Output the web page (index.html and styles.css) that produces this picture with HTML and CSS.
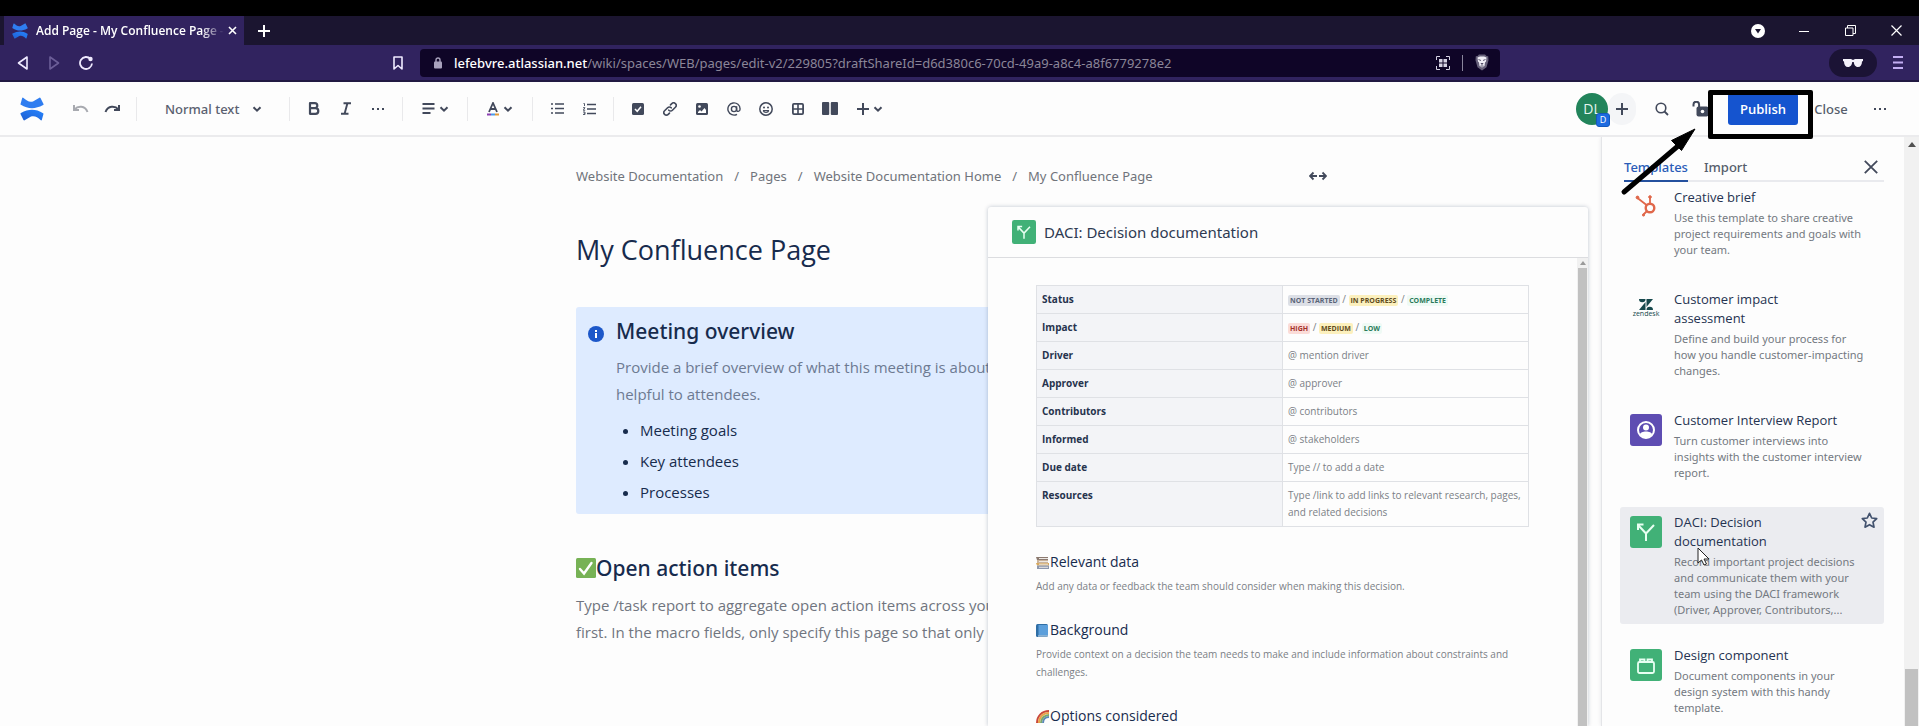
FILE: index.html
```html
<!DOCTYPE html>
<html lang="en">
<head>
<meta charset="utf-8">
<title>Add Page - My Confluence Page</title>
<link rel="stylesheet" href="styles.css">
</head>
<body>
<svg width="0" height="0" class="defs" aria-hidden="true">
  <defs>
    <linearGradient id="g1" x1="1" y1="0" x2="0" y2="1"><stop offset="0" stop-color="#2684ff"/><stop offset="1" stop-color="#1f5fd0"/></linearGradient>
    <symbol id="logo" viewBox="0 0 24 24"><path fill="#2f7df0" d="M3.200.8C6.500 3.800 9.500 5.600 13 4.400L19.400.7a.8.8 0 0 1 1.100.3l3 6a.8.8 0 0 1-.4 1.100C15 12.500 8 12.200.9 7.800a.8.8 0 0 1-.3-1.100L2.200 1a.7.7 0 0 1 1-.2z"/><path fill="url(#g1)" d="M20.800 23.200C17.500 20.200 14.500 18.400 11 19.600l-6.400 3.700a.8.8 0 0 1-1.100-.3L.5 17a.8.8 0 0 1 .4-1.100C9 11.500 16 11.800 23.100 16.200a.8.8 0 0 1 .3 1.100L21.800 23a.7.7 0 0 1-1 .2z"/></symbol>
    <symbol id="chev" viewBox="0 0 10 10"><path d="M1.500 3.200 5 6.700 8.500 3.200" fill="none" stroke="currentColor" stroke-width="2"/></symbol>
    <symbol id="plus" viewBox="0 0 12 12"><path d="M6 0v12M0 6h12" stroke="currentColor" stroke-width="2"/></symbol>
    <symbol id="dots" viewBox="0 0 14 4"><path d="M1 1h2v2H1zM6 1h2v2H6zM11 1h2v2h-2z" fill="currentColor"/></symbol>
    <symbol id="daci" viewBox="0 0 32 32"><rect width="32" height="32" rx="3" fill="#41b177"/><path d="M16 25v-7.500L8.500 9.500M16 17.500l8-8.500M8 14V8.500h5.500" fill="none" stroke="#e8fff2" stroke-width="2"/></symbol>
  </defs>
</svg>

<div class="browser">
  <div class="tabstrip">
    <div class="tab">
      <svg class="i16"><use href="#logo"/></svg>
      <span class="tab-title">Add Page - My Confluence Page -</span>
      <button class="plain tab-close" aria-label="Close tab"><svg width="9" height="9" viewBox="0 0 9 9"><path d="M1 1l7 7M8 1 1 8" stroke="currentColor" stroke-width="1.600"/></svg></button>
    </div>
    <button class="plain newtab" aria-label="New tab"><svg width="12" height="12"><use href="#plus"/></svg></button>
    <div class="window-controls">
      <button class="plain wbtn" aria-label="Search tabs"><svg width="14" height="14" viewBox="0 0 14 14"><circle cx="7" cy="7" r="7" fill="#fff"/><path d="M4 5h6L7 9.500z" fill="#1b1530"/></svg></button>
      <button class="plain wbtn" aria-label="Minimize"><svg width="10" height="10" viewBox="0 0 10 10"><path d="M0 5.500h10" stroke="currentColor"/></svg></button>
      <button class="plain wbtn" aria-label="Restore"><svg width="11" height="11" viewBox="0 0 11 11"><path d="M.5 3h7.500v7.500H.5zM2.500 3V.5h8V8.500H8" fill="none" stroke="currentColor"/></svg></button>
      <button class="plain wbtn" aria-label="Close window"><svg width="11" height="11" viewBox="0 0 11 11"><path d="M.5.5l10 10M10.500.5l-10 10" stroke="currentColor" stroke-width="1.200"/></svg></button>
    </div>
  </div>
  <div class="navbar">
    <div class="nav-left">
      <button class="plain nbtn" aria-label="Back"><svg width="11" height="14" viewBox="0 0 11 14"><path d="M10 1v12L1.500 7z" fill="none" stroke="currentColor" stroke-width="1.600" stroke-linejoin="round"/></svg></button>
      <button class="plain nbtn dim" aria-label="Forward"><svg width="11" height="14" viewBox="0 0 11 14"><path d="M1 1v12L9.500 7z" fill="none" stroke="currentColor" stroke-width="1.600" stroke-linejoin="round"/></svg></button>
      <button class="plain nbtn" aria-label="Reload"><svg width="14" height="14" viewBox="0 0 14 14"><path d="M11.500 3A6 6 0 1 0 13 7.500" fill="none" stroke="currentColor" stroke-width="1.800"/><circle cx="11.500" cy="3" r="2.200" fill="currentColor"/></svg></button>
      <button class="plain nbtn bookmark" aria-label="Bookmark"><svg width="10" height="14" viewBox="0 0 10 14"><path d="M1 1h8v12L5 9.500 1 13z" fill="none" stroke="currentColor" stroke-width="1.600" stroke-linejoin="round"/></svg></button>
    </div>
    <div class="urlbar">
      <svg width="8" height="12" viewBox="0 0 8 12"><path d="M2 5V3a2 2 0 0 1 4 0v2" fill="none" stroke="#a9a2bd" stroke-width="1.400"/><rect y="4.500" width="8" height="7" rx="1" fill="#a9a2bd"/></svg>
      <div class="url"><span class="host">lefebvre.atlassian.net</span>/wiki/spaces/WEB/pages/edit-v2/229805?draftShareId=d6d380c6-70cd-49a9-a8c4-a8f6779278e2</div>
      <svg width="14" height="14" viewBox="0 0 14 14" fill="none" stroke="#d5d1e2"><path d="M.5 4V.5H4M10 .5h3.500V4M13.500 10v3.500H10M4 13.500H.5V10"/><path d="M3 3h3.500v3.500H3zM7.500 3H11v3.500H7.500zM3 7.500h3.500V11H3zM7.500 7.500H11V11H7.500z" fill="#d5d1e2" stroke="none"/></svg>
      <span class="url-sep"></span>
      <svg width="14" height="17" viewBox="0 0 14 17"><path d="M4 .5h6l1.500 1.500 1.700.3.3 4-2 7L7 16.500 2.500 13.300l-2-7 .3-4L2.500 2z" fill="#67617a"/><path d="M2.500 3.500 5 2.500h4l2.500 1-.5 4-1 1-.5 3.500L7 13.500 4.500 12 4 8.500l-1-1z" fill="#f1eff6"/><path d="M3.500 5.500 6 6.500M10.500 5.500 8 6.500M6 9.500h2L7 10.500zM5.500 12h3" stroke="#4b4560" stroke-width=".9" fill="#4b4560"/></svg>
    </div>
    <div class="nav-right">
      <button class="plain pill" aria-label="Private profile"><svg width="20" height="8" viewBox="0 0 20 8"><path d="M0 0h8l2 1 2-1h8v2l-1 .5C19 6 17.500 8 15 8c-2.800 0-4-2.500-4.200-5h-1.600C9 5.500 7.800 8 5 8 2.500 8 1 6 1 2.500L0 2z" fill="#f4f1fa"/></svg></button>
      <button class="plain menu" aria-label="Menu"><svg width="10" height="13" viewBox="0 0 10 13"><path d="M0 1h10M0 6.500h10M0 12h10" stroke="#c3aef3" stroke-width="1.800"/></svg></button>
    </div>
  </div>
</div>

<header class="toolbar">
  <a href="#" class="home" aria-label="Confluence home"><svg width="24" height="24"><use href="#logo"/></svg></a>
  <button class="tb dis" aria-label="Undo"><svg width="17" height="10" viewBox="0 0 17 10"><path d="M2 1v5h5M2.500 5.500C6 1.500 13 1.500 15.500 8" fill="none" stroke="currentColor" stroke-width="2"/></svg></button>
  <button class="tb" aria-label="Redo"><svg width="17" height="10" viewBox="0 0 17 10"><path d="M15 1v5h-5M14.500 5.500C11 1.500 4 1.500 1.500 8" fill="none" stroke="currentColor" stroke-width="2"/></svg></button>
  <span class="sep"></span>
  <div class="style-pick"><select aria-label="Text style"><option>Normal text</option></select><svg width="10" height="10"><use href="#chev"/></svg></div>
  <span class="sep"></span>
  <button class="tb" aria-label="Bold"><svg width="12" height="13" viewBox="0 0 12 13"><path d="M2 1.200h4.800a2.500 2.500 0 0 1 0 5H2zM2 6.200h5.500a2.800 2.800 0 0 1 0 5.600H2z" fill="none" stroke="currentColor" stroke-width="2.200" stroke-linejoin="round"/></svg></button>
  <button class="tb" aria-label="Italic"><svg width="12" height="13" viewBox="0 0 12 13"><path d="M3.500 1.200H11M1 11.800h7.500M7.500 1 4.500 12" fill="none" stroke="currentColor" stroke-width="1.900"/></svg></button>
  <button class="tb" aria-label="More formatting"><svg width="14" height="4"><use href="#dots"/></svg></button>
  <span class="sep"></span>
  <button class="tb wide" aria-label="Alignment"><svg width="13" height="11" viewBox="0 0 13 11"><path d="M.5 1h12M.5 5.500h12M.5 10h8" stroke="currentColor" stroke-width="2"/></svg><svg width="10" height="10"><use href="#chev"/></svg></button>
  <span class="sep"></span>
  <button class="tb wide" aria-label="Text colour"><svg width="12" height="14" viewBox="0 0 12 14"><path d="M2 10 6 1l4 9M3.300 7h5.400" fill="none" stroke="currentColor" stroke-width="1.800"/><path d="M0 12.500h4" stroke="#8b3fb0" stroke-width="2"/><path d="M4 12.500h4" stroke="#4a9be8" stroke-width="2"/><path d="M8 12.500h4" stroke="#e09a3a" stroke-width="2"/></svg><svg width="10" height="10"><use href="#chev"/></svg></button>
  <span class="sep"></span>
  <button class="tb" aria-label="Bullet list"><svg width="13" height="11" viewBox="0 0 13 11"><path d="M0 1h2M0 5.500h2M0 10h2M4 1h9M4 5.500h9M4 10h9" stroke="currentColor" stroke-width="1.700"/></svg></button>
  <button class="tb" aria-label="Numbered list"><svg width="13" height="12" viewBox="0 0 13 12"><path d="M4 1.500h9M4 6h9M4 10.500h9" stroke="currentColor" stroke-width="1.700"/><path d="M.5.5h1V3M0 4.700h2L.2 7.300H2.200M0 9h2v2.500H0M.8 10.200H2" fill="none" stroke="currentColor" stroke-width=".9"/></svg></button>
  <span class="sep"></span>
  <button class="tb" aria-label="Action item"><svg width="12" height="12" viewBox="0 0 12 12"><rect width="12" height="12" rx="1.500" fill="currentColor"/><path d="M3 6l2.200 2.300L9 3.700" fill="none" stroke="#fff" stroke-width="1.500"/></svg></button>
  <button class="tb" aria-label="Link"><svg width="14" height="14" viewBox="0 0 14 14"><g fill="none" stroke="currentColor" stroke-width="1.600" stroke-linecap="round"><path d="M5.800 8.200a2.500 2.500 0 0 0 3.600 0l3-3A2.500 2.500 0 0 0 8.800 1.600L7.500 2.900"/><path d="M8.200 5.800a2.500 2.500 0 0 0-3.600 0l-3 3a2.500 2.500 0 0 0 3.600 3.600l1.300-1.300"/></g></svg></button>
  <button class="tb" aria-label="Image"><svg width="12" height="12" viewBox="0 0 12 12"><rect width="12" height="12" rx="1.500" fill="currentColor"/><circle cx="3.500" cy="3.500" r="1.300" fill="#fff"/><path d="M2 10V9l2-2 1.500 1.500L8.500 5 10 7v3z" fill="#fff"/></svg></button>
  <button class="tb" aria-label="Mention"><svg width="14" height="14" viewBox="0 0 14 14"><g fill="none" stroke="currentColor" stroke-width="1.400"><circle cx="7" cy="7" r="2.600"/><path d="M9.600 4.200v3.600c0 2.400 3.500 2 3.500-.8A6.100 6.100 0 1 0 10 12.300"/></g></svg></button>
  <button class="tb" aria-label="Emoji"><svg width="14" height="14" viewBox="0 0 14 14"><circle cx="7" cy="7" r="6.200" fill="none" stroke="currentColor" stroke-width="1.500"/><circle cx="5" cy="5.500" r="1" fill="currentColor"/><circle cx="9" cy="5.500" r="1" fill="currentColor"/><path d="M4 8.500h6M4.200 8.500c.8 2.500 4.800 2.500 5.600 0" fill="none" stroke="currentColor" stroke-width="1.200"/></svg></button>
  <button class="tb" aria-label="Table"><svg width="12" height="12" viewBox="0 0 12 12"><rect x=".9" y=".9" width="10.200" height="10.200" rx="1" fill="none" stroke="currentColor" stroke-width="1.800"/><path d="M6 1v10M1 6h10" stroke="currentColor" stroke-width="1.600"/></svg></button>
  <button class="tb" aria-label="Layouts"><svg width="16" height="13" viewBox="0 0 16 13"><rect width="7.200" height="13" rx="1" fill="currentColor"/><rect x="8.800" width="7.200" height="13" rx="1" fill="currentColor"/></svg></button>
  <button class="tb wide" aria-label="Insert"><svg width="12" height="12"><use href="#plus"/></svg><svg width="10" height="10"><use href="#chev"/></svg></button>

  <div class="actions">
    <span class="avatar">DL<span class="avatar-badge">D</span></span>
    <button class="invite" aria-label="Invite"><svg width="12" height="12"><use href="#plus"/></svg></button>
    <button class="tb search" aria-label="Search"><svg width="14" height="14" viewBox="0 0 14 14"><circle cx="6" cy="6" r="4.800" fill="none" stroke="currentColor" stroke-width="1.600"/><path d="M9.500 9.500 13 13" stroke="currentColor" stroke-width="1.800"/></svg></button>
    <button class="tb lock" aria-label="Restrictions"><svg width="17" height="16" viewBox="0 0 17 16"><path d="M1.500 5.500v-2a2.800 2.800 0 0 1 5.600 0V7" fill="none" stroke="currentColor" stroke-width="2"/><rect x="4.500" y="5.500" width="12" height="10" rx="2" fill="currentColor"/><circle cx="10.500" cy="10.500" r="1.800" fill="#fff"/></svg></button>
    <button class="publish">Publish</button>
    <button class="close">Close</button>
    <button class="tb" aria-label="More actions"><svg width="14" height="4"><use href="#dots"/></svg></button>
  </div>
</header>

<main class="workspace">
  <article class="editor">
    <nav class="crumbs" aria-label="Breadcrumbs">
      <a href="#">Website Documentation</a><span>/</span><a href="#">Pages</a><span>/</span><a href="#">Website Documentation Home</a><span>/</span><a href="#">My Confluence Page</a>
      <button class="plain widen" aria-label="Make page full-width"><svg width="18" height="10" viewBox="0 0 18 10"><path d="M8 5H1.500M4.500 1.500 1 5l3.500 3.500M10 5h6.500M13.500 1.500 17 5l-3.500 3.500" fill="none" stroke="currentColor" stroke-width="1.800"/></svg></button>
    </nav>
    <h1>My Confluence Page</h1>
    <section class="panel">
      <svg class="info" width="16" height="16" viewBox="0 0 16 16"><circle cx="8" cy="8" r="8" fill="#1c57c9"/><path d="M7 7h2v5H7zM7 4h2v2H7z" fill="#fff"/></svg>
      <div>
        <h2>Meeting overview</h2>
        <p>Provide a brief overview of what this meeting is about<br>helpful to attendees.</p>
        <ul><li>Meeting goals</li><li>Key attendees</li><li>Processes</li></ul>
      </div>
    </section>
    <h2 class="with-emoji"><svg width="20" height="20" viewBox="0 0 20 20"><rect width="20" height="20" rx="1.500" fill="#77b255"/><path d="M4 11l4 4.500L15.500 5" fill="none" stroke="#fff" stroke-width="2.400" stroke-linecap="round"/></svg>Open action items</h2>
    <p>Type /task report to aggregate open action items across your<br>first. In the macro fields, only specify this page so that only</p>
  </article>

  <section class="preview" aria-label="Template preview">
    <header><svg width="24" height="24"><use href="#daci"/></svg><h2>DACI: Decision documentation</h2></header>
    <div class="preview-main">
      <div class="preview-doc">
        <table>
          <tr><th scope="row">Status</th><td><b class="loz grey">NOT STARTED</b> / <b class="loz yellow">IN PROGRESS</b> / <b class="loz green">COMPLETE</b></td></tr>
          <tr><th scope="row">Impact</th><td><b class="loz red">HIGH</b> / <b class="loz yellow">MEDIUM</b> / <b class="loz green">LOW</b></td></tr>
          <tr><th scope="row">Driver</th><td>@ mention driver</td></tr>
          <tr><th scope="row">Approver</th><td>@ approver</td></tr>
          <tr><th scope="row">Contributors</th><td>@ contributors</td></tr>
          <tr><th scope="row">Informed</th><td>@ stakeholders</td></tr>
          <tr><th scope="row">Due date</th><td>Type // to add a date</td></tr>
          <tr><th scope="row">Resources</th><td>Type /link to add links to relevant research, pages,<br>and related decisions</td></tr>
        </table>
        <h3><svg width="13" height="13" viewBox="0 0 13 13"><path d="M0 1h12v3H1z" fill="#8c7a70"/><path d="M1 4h11v3H1z" fill="#c9b39c"/><path d="M0 7h13v2.500H1z" fill="#d8a85c"/><path d="M1 9.500h12V13H1z" fill="#8d97ad"/><path d="M3 2.500h9M3 5.500h9M3 8.200h9M3 11.300h9" stroke="#ece8e4" stroke-width="1"/></svg>Relevant data</h3>
        <p>Add any data or feedback the team should consider when making this decision.</p>
        <h3><svg width="13" height="13" viewBox="0 0 13 13"><rect width="12" height="13" rx="1.500" fill="#2f6ea5"/><path d="M2.500 1H12v10.500H2.500z" fill="#5c9fdb"/><path d="M2 12h10" stroke="#cfdeec"/></svg>Background</h3>
        <p>Provide context on a decision the team needs to make and include information about constraints and challenges.</p>
        <h3><svg width="13" height="13" viewBox="0 0 13 13" fill="none" stroke-width="2"><path d="M1 13C1 6 6 1 13 1" stroke="#c9473a"/><path d="M3 13C3 7 7 3 13 3" stroke="#e8a24a"/><path d="M5 13C5 8.500 8.500 5 13 5" stroke="#7aa86a"/><path d="M7 13c0-3.500 2.500-6 6-6" stroke="#5b88b8"/></svg>Options considered</h3>
      </div>
      <div class="mini-scroll" aria-hidden="true"><svg width="6" height="4" viewBox="0 0 6 4"><path d="M0 4h6L3 0z" fill="#9a9a9a"/></svg><span></span></div>
    </div>
  </section>

  <aside class="sidebar">
    <div class="tabs">
      <div class="tablist" role="tablist"><button role="tab" aria-selected="true">Templates</button><button role="tab" aria-selected="false">Import</button></div>
      <button class="plain side-close" aria-label="Close panel"><svg width="14" height="14" viewBox="0 0 14 14"><path d="M.8.8l12.400 12.400M13.200.8.8 13.200" stroke="currentColor" stroke-width="1.800"/></svg></button>
    </div>
    <div class="list">
      <div class="item">
        <svg width="32" height="32" viewBox="0 0 32 32" fill="none" stroke="#e0674a"><circle cx="20" cy="17" r="4.300" stroke-width="2.400"/><path d="M20 12V7M16.500 14 7.500 7M17 20l-3.500 3.500" stroke-width="1.800"/><circle cx="20" cy="6" r="1.300" fill="#e0674a"/><circle cx="7.500" cy="6.500" r="1.400" fill="#e0674a"/><circle cx="13.500" cy="24" r="1.100" fill="#e0674a"/></svg>
        <div><h4>Creative brief</h4><p>Use this template to share creative<br>project requirements and goals with<br>your team.</p></div>
      </div>
      <div class="item">
        <span class="zendesk"><svg width="14" height="11" viewBox="0 0 14 11"><path d="M0 0h6.500a3.200 3.200 0 0 1-6.500 0zM14 0v0L7.500 8V0zM6.500 11H0l6.500-8zM7.500 11a3.200 3.200 0 0 1 6.500 0z" fill="#17494d"/></svg>zendesk</span>
        <div><h4>Customer impact<br>assessment</h4><p>Define and build your process for<br>how you handle customer-impacting<br>changes.</p></div>
      </div>
      <div class="item">
        <svg width="32" height="32" viewBox="0 0 32 32"><rect width="32" height="32" rx="3" fill="#5e4db2"/><circle cx="16" cy="16" r="8" fill="none" stroke="#fff" stroke-width="2"/><circle cx="16" cy="13.500" r="3" fill="#fff"/><path d="M10 20.500c0-4 12-4 12 0-1.500 2-3.500 3-6 3s-4.500-1-6-3z" fill="#fff"/></svg>
        <div><h4>Customer Interview Report</h4><p>Turn customer interviews into<br>insights with the customer interview<br>report.</p></div>
      </div>
      <div class="item hover">
        <svg width="32" height="32"><use href="#daci"/></svg>
        <div><h4>DACI: Decision<br>documentation</h4><p>Record important project decisions<br>and communicate them with your<br>team using the DACI framework<br>(Driver, Approver, Contributors,...</p></div>
        <button class="plain star" aria-label="Star template"><svg width="17" height="17" viewBox="0 0 17 17"><path d="M8.500 1.300l2.200 4.700 5 .6-3.700 3.500 1 5.100-4.500-2.500L4 15.200l1-5.100L1.300 6.600l5-.6z" fill="none" stroke="currentColor" stroke-width="1.700" stroke-linejoin="round"/></svg></button>
        <svg class="cursor" width="13" height="19" viewBox="0 0 13 19"><path d="M1 1v15l3.500-3 2.500 5 2.500-1-2.500-5H12z" fill="#fff" stroke="#222" stroke-width="1"/></svg>
      </div>
      <div class="item">
        <svg width="32" height="32" viewBox="0 0 32 32"><rect width="32" height="32" rx="3" fill="#41b177"/><g fill="none" stroke="#e8fff2" stroke-width="1.800"><rect x="8" y="13" width="16" height="11" rx="1.500"/><path d="M10 13v-2.500h4.500V13M17.500 13v-2.500H22V13"/></g></svg>
        <div><h4>Design component</h4><p>Document components in your<br>design system with this handy<br>template.</p></div>
      </div>
    </div>
  </aside>

  <div class="page-scroll" aria-hidden="true"><svg width="8" height="5" viewBox="0 0 8 5"><path d="M0 5h8L4 0z" fill="#505050"/></svg><span></span></div>
</main>

<div class="callout"></div>
<svg class="arrow" width="80" height="74" viewBox="0 0 80 74"><path d="M6 67 60 21" stroke="#000" stroke-width="5" stroke-linecap="round"/><path d="M77 4 53.500 15.500 63.500 25.500z" fill="#000" stroke="#000"/></svg>
</body>
</html>
```
FILE: styles.css
```css
* { box-sizing: border-box; }
html, body { height: 100%; }
body {
  margin: 0;
  display: flex;
  flex-direction: column;
  position: relative;
  overflow: hidden;
  background: #fdfdfd;
  color: #172b4d;
  font: 14px/20px "Open Sans", "Noto Sans", sans-serif;
}
h1, h2, h3, h4, p, ul { margin: 0; font-weight: 400; }
a { color: inherit; text-decoration: none; }
button { font: inherit; color: inherit; padding: 0; border: 0; background: none; }
svg { flex: none; display: block; }
.defs { position: absolute; }
.plain { display: flex; align-items: center; justify-content: center; }
.i16 { width: 16px; height: 16px; }

/* Browser chrome */
.browser { border-top: 16px solid #000; color: #fff; flex: none; }
.tabstrip { display: flex; height: 29px; background: #1b1530; padding-left: 4px; }
.tab { display: flex; align-items: center; width: 240px; padding: 0 2px 0 8px; background: #31235f; }
.tab-title {
  flex: 1;
  margin-left: 8px;
  white-space: nowrap;
  font-size: 12px;
  font-weight: 600;
  mask-image: linear-gradient(to right, #000 88%, transparent);
}
.tab-close { width: 20px; height: 16px; }
.newtab { width: 40px; }
.window-controls { display: flex; margin-left: auto; }
.wbtn { width: 46px; }
.navbar {
  display: grid;
  grid-template-columns: 420px 1fr 419px;
  align-items: center;
  height: 37px;
  background: #31235f;
  border-bottom: 2px solid #211942;
}
.nav-left, .nav-right { display: flex; align-items: center; }
.nav-left { padding: 0 6px; color: #efeaff; }
.nbtn { width: 32px; height: 28px; }
.dim { color: #6c5e98; }
.bookmark { margin-left: auto; }
.urlbar {
  display: flex;
  align-items: center;
  height: 28px;
  padding: 0 11px 0 14px;
  gap: 12px;
  border-radius: 4px;
  background: #0f0527;
  min-width: 0;
}
.url {
  flex: 1;
  min-width: 0;
  overflow: hidden;
  white-space: nowrap;
  color: #8b8598;
  font: 13px/20px "Noto Sans", sans-serif;
}
.host { color: #fff; font-weight: 500; }
.url-sep { width: 1px; height: 16px; background: #8a859c; }
.nav-right { justify-content: flex-end; gap: 8px; padding-right: 8px; }
.pill { width: 48px; height: 28px; border-radius: 14px; background: #1b1335; }
.menu { width: 26px; height: 28px; }

/* Editor toolbar */
.toolbar {
  display: flex;
  align-items: center;
  flex: none;
  height: 55px;
  padding: 0 23px 0 20px;
  border-bottom: 2px solid #ebebed;
  color: #42495b;
}
.home { width: 44px; }
.tb { display: flex; align-items: center; justify-content: center; width: 32px; height: 32px; }
.tb.wide { width: 48px; gap: 4px; }
.dis { color: #a8aab0; }
.sep { width: 1px; height: 24px; margin: 0 8px; background: #e9e9eb; }
.style-pick { position: relative; }
.style-pick select {
  appearance: none;
  width: 136px;
  height: 32px;
  padding: 0 0 0 20px;
  border: 0;
  background: none;
  color: #5a6170;
  font: 500 13px/20px "Noto Sans", sans-serif;
}
.style-pick svg { position: absolute; right: 19px; top: 11px; pointer-events: none; }
.actions { display: flex; align-items: center; margin-left: auto; }
.avatar {
  position: relative;
  width: 32px;
  height: 32px;
  border-radius: 50%;
  background: #22845b;
  color: #e6f5ee;
  font-size: 14px;
  line-height: 32px;
  text-align: center;
}
.avatar-badge {
  position: absolute;
  right: -2px;
  bottom: -2px;
  width: 14px;
  height: 14px;
  border: 1px solid #1558bc;
  border-radius: 3px;
  background: #1d6be0;
  color: #fff;
  font-size: 9px;
  line-height: 12px;
}
.invite {
  display: flex;
  align-items: center;
  justify-content: center;
  width: 28px;
  height: 32px;
  border-radius: 14px;
  background: #f4f5f7;
}
.search { margin: 0 6px 0 10px; }
.publish { width: 70px; height: 32px; margin-left: 12px; border-radius: 3px; background: #1554cf; color: #fff; font-weight: 600; font-size: 13px; }
.close { width: 66px; height: 32px; color: #565d6b; font: 500 13px/20px "Noto Sans", sans-serif; }

/* Page editor */
.workspace { position: relative; flex: 1; min-height: 0; display: flex; overflow: hidden; padding-right: 15px; }
.editor {
  width: 752px;
  margin: 0 auto;
  padding-top: 28px;
  font-size: 15px;
  line-height: 27px;
  white-space: nowrap;
}
.editor p { color: #70757f; }
.crumbs { display: flex; align-items: center; gap: 11px; font: 13px/22px "Noto Sans", sans-serif; color: #70747b; }
.widen { margin-left: auto; color: #42495b; width: 20px; height: 20px; }
h1 { margin-top: 43px; font-size: 27px; line-height: 40px; }
.panel {
  display: flex;
  gap: 12px;
  margin-top: 37px;
  padding: 10px 12px 8px;
  border-radius: 3px;
  background: #deebff;
}
.info { margin-top: 9px; }
.editor h2 { font: 500 21px/28px "Noto Sans", sans-serif; }
.editor h2 + p { margin-top: 10px; }
.editor .panel p { margin-top: 9px; color: #6d7a92; }
.editor ul { margin-top: 9px; padding-left: 24px; display: flex; flex-direction: column; gap: 4px; }
.editor .with-emoji { display: flex; align-items: center; margin-top: 40px; }

/* Template preview */
.preview {
  position: absolute;
  top: 70px;
  right: 331px;
  bottom: 0;
  width: 600px;
  display: flex;
  flex-direction: column;
  border-radius: 3px 3px 0 0;
  background: #fdfdfd;
  box-shadow: 0 0 4px rgba(9, 30, 66, .25);
}
.preview header { display: flex; align-items: center; gap: 8px; height: 51px; padding: 0 24px; border-bottom: 1px solid #dcdde0; }
.preview h2 { font: 15px/20px "Noto Sans", sans-serif; color: #2e3a52; }
.preview-main { display: flex; flex: 1; min-height: 0; }
.preview-doc { flex: 1; overflow: hidden; padding: 27px 48px 0; font-size: 10px; line-height: 18px; color: #7b7f86; }
.preview table { width: 493px; border-collapse: collapse; table-layout: fixed; line-height: 17px; }
.preview th, .preview td { padding: 5px; border: 1px solid #dfe1e5; text-align: left; vertical-align: top; white-space: nowrap; }
.preview th { background: #f3f4f7; color: #26334d; font-size: 10px; font-weight: 700; }
.loz { padding: 1px 2px; border-radius: 2px; font-size: 7px; line-height: 8px; font-weight: 700; }
.grey { background: #dcdfe6; color: #5a6478; }
.yellow { background: #fcf0bd; color: #5f4b1c; }
.green { background: #effaf5; color: #2b7a5a; }
.red { background: #fbdcd8; color: #a3312a; }
.preview h3 { display: flex; align-items: center; gap: 1px; margin-top: 25px; color: #172b4d; font-size: 14px; line-height: 20px; }
.preview h3 + p { margin-top: 5px; }
.mini-scroll { display: flex; flex-direction: column; align-items: center; width: 11px; padding-top: 3px; gap: 3px; background: #f1f1f1; }
.mini-scroll span { flex: 1; width: 9px; background: #c1c1c1; }

/* Templates sidebar */
.sidebar {
  position: absolute;
  top: 0;
  right: 15px;
  bottom: 0;
  width: 303px;
  display: flex;
  flex-direction: column;
  border-left: 1px solid #e4e5e8;
  background: #fdfdfd;
  box-shadow: 0 0 4px rgba(9, 30, 66, .1);
}
.tabs { display: flex; flex: none; height: 45px; margin: 0 20px 0 22px; border-bottom: 2px solid #e9eaee; }
.tablist { display: flex; gap: 16px; align-items: flex-end; flex: 1; }
.tablist button { height: 28px; margin-bottom: -2px; border-bottom: 2px solid transparent; color: #565d6b; font: 500 13px/24px "Noto Sans", sans-serif; }
.tablist button[aria-selected="true"] { color: #2a5cb8; border-bottom-color: #24509e; }
.side-close { width: 30px; height: 30px; margin: 15px -2px 0 0; color: #42495b; }
.list { display: flex; flex-direction: column; gap: 16px; flex: 1; min-height: 0; overflow: hidden; padding: 0 20px 0 18px; }
.item { position: relative; display: flex; flex: none; gap: 12px; padding: 6px 10px 10px; border-radius: 3px; white-space: nowrap; }
.item > svg, .zendesk { margin-top: 3px; }
.item.hover { background: #ebecf0; padding-bottom: 6px; }
.item h4 { font-size: 13px; line-height: 19px; color: #253351; }
.item p { margin-top: 3px; font: 11px/16px "Noto Sans", sans-serif; color: #747981; }
.zendesk { display: flex; flex-direction: column; align-items: center; width: 32px; height: 32px; padding-top: 6px; color: #17494d; font-size: 7px; line-height: 8px; }
.star { position: absolute; top: 5px; right: 6px; color: #42526e; }
.item .cursor { position: absolute; left: 77px; top: 37px; }

.page-scroll { position: absolute; top: 0; right: 0; bottom: 0; width: 15px; display: flex; flex-direction: column; align-items: center; padding-top: 5px; background: #f1f1f1; }
.page-scroll span { width: 13px; height: 57px; margin-top: auto; background: #c1c1c1; }

/* Annotation over the Publish button */
.callout { position: absolute; top: 90px; right: 106px; width: 105px; height: 49px; border: 5px solid #000; border-radius: 2px; }
.arrow { position: absolute; top: 125px; right: 221px; }
```
